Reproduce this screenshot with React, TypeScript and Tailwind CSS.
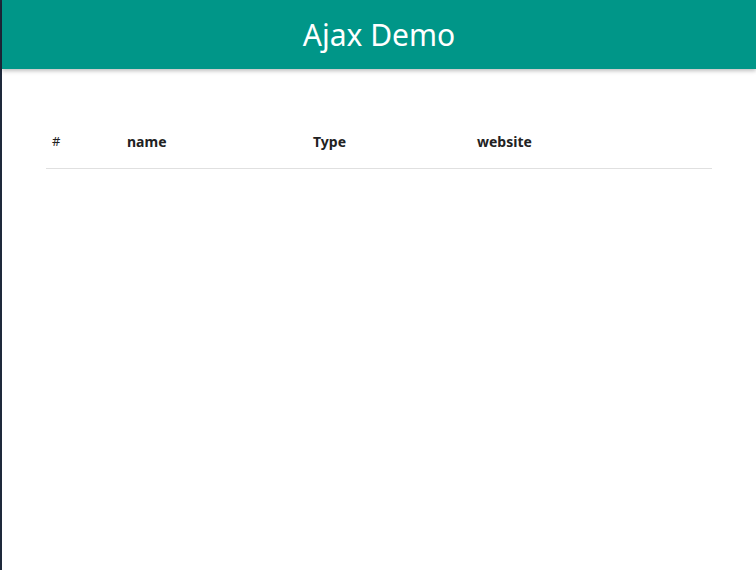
const columns = ["#", "name", "Type", "website"];

const App = () => {
  return (
    <div className="flex min-h-[570px] bg-[#1e293b] font-['Noto_Sans',sans-serif]">
      <div className="ml-[2px] flex-1 bg-white">
        <header className="flex h-[69px] items-center justify-center bg-[#009688] shadow-[0_2px_4px_rgba(0,0,0,0.25)]">
          <h1 className="text-[30px] font-normal text-white">Ajax Demo</h1>
        </header>

        <div className="pl-[44px] pr-[44px] pt-[46px]">
          <table className="w-[666px] border-collapse text-left">
            <thead>
              <tr className="border-b border-[#e0e0e0]">
                <th className="w-[75px] px-[6px] py-[16px] text-[13px] font-normal text-[#222]">{columns[0]}</th>
                <th className="w-[186px] px-[6px] py-[16px] text-[14px] font-bold text-[#222]">{columns[1]}</th>
                <th className="w-[164px] px-[6px] py-[16px] text-[14px] font-bold text-[#222]">{columns[2]}</th>
                <th className="px-[6px] py-[16px] text-[14px] font-bold text-[#222]">{columns[3]}</th>
              </tr>
            </thead>
            <tbody></tbody>
          </table>
        </div>
      </div>
    </div>
  );
};

export default App;
